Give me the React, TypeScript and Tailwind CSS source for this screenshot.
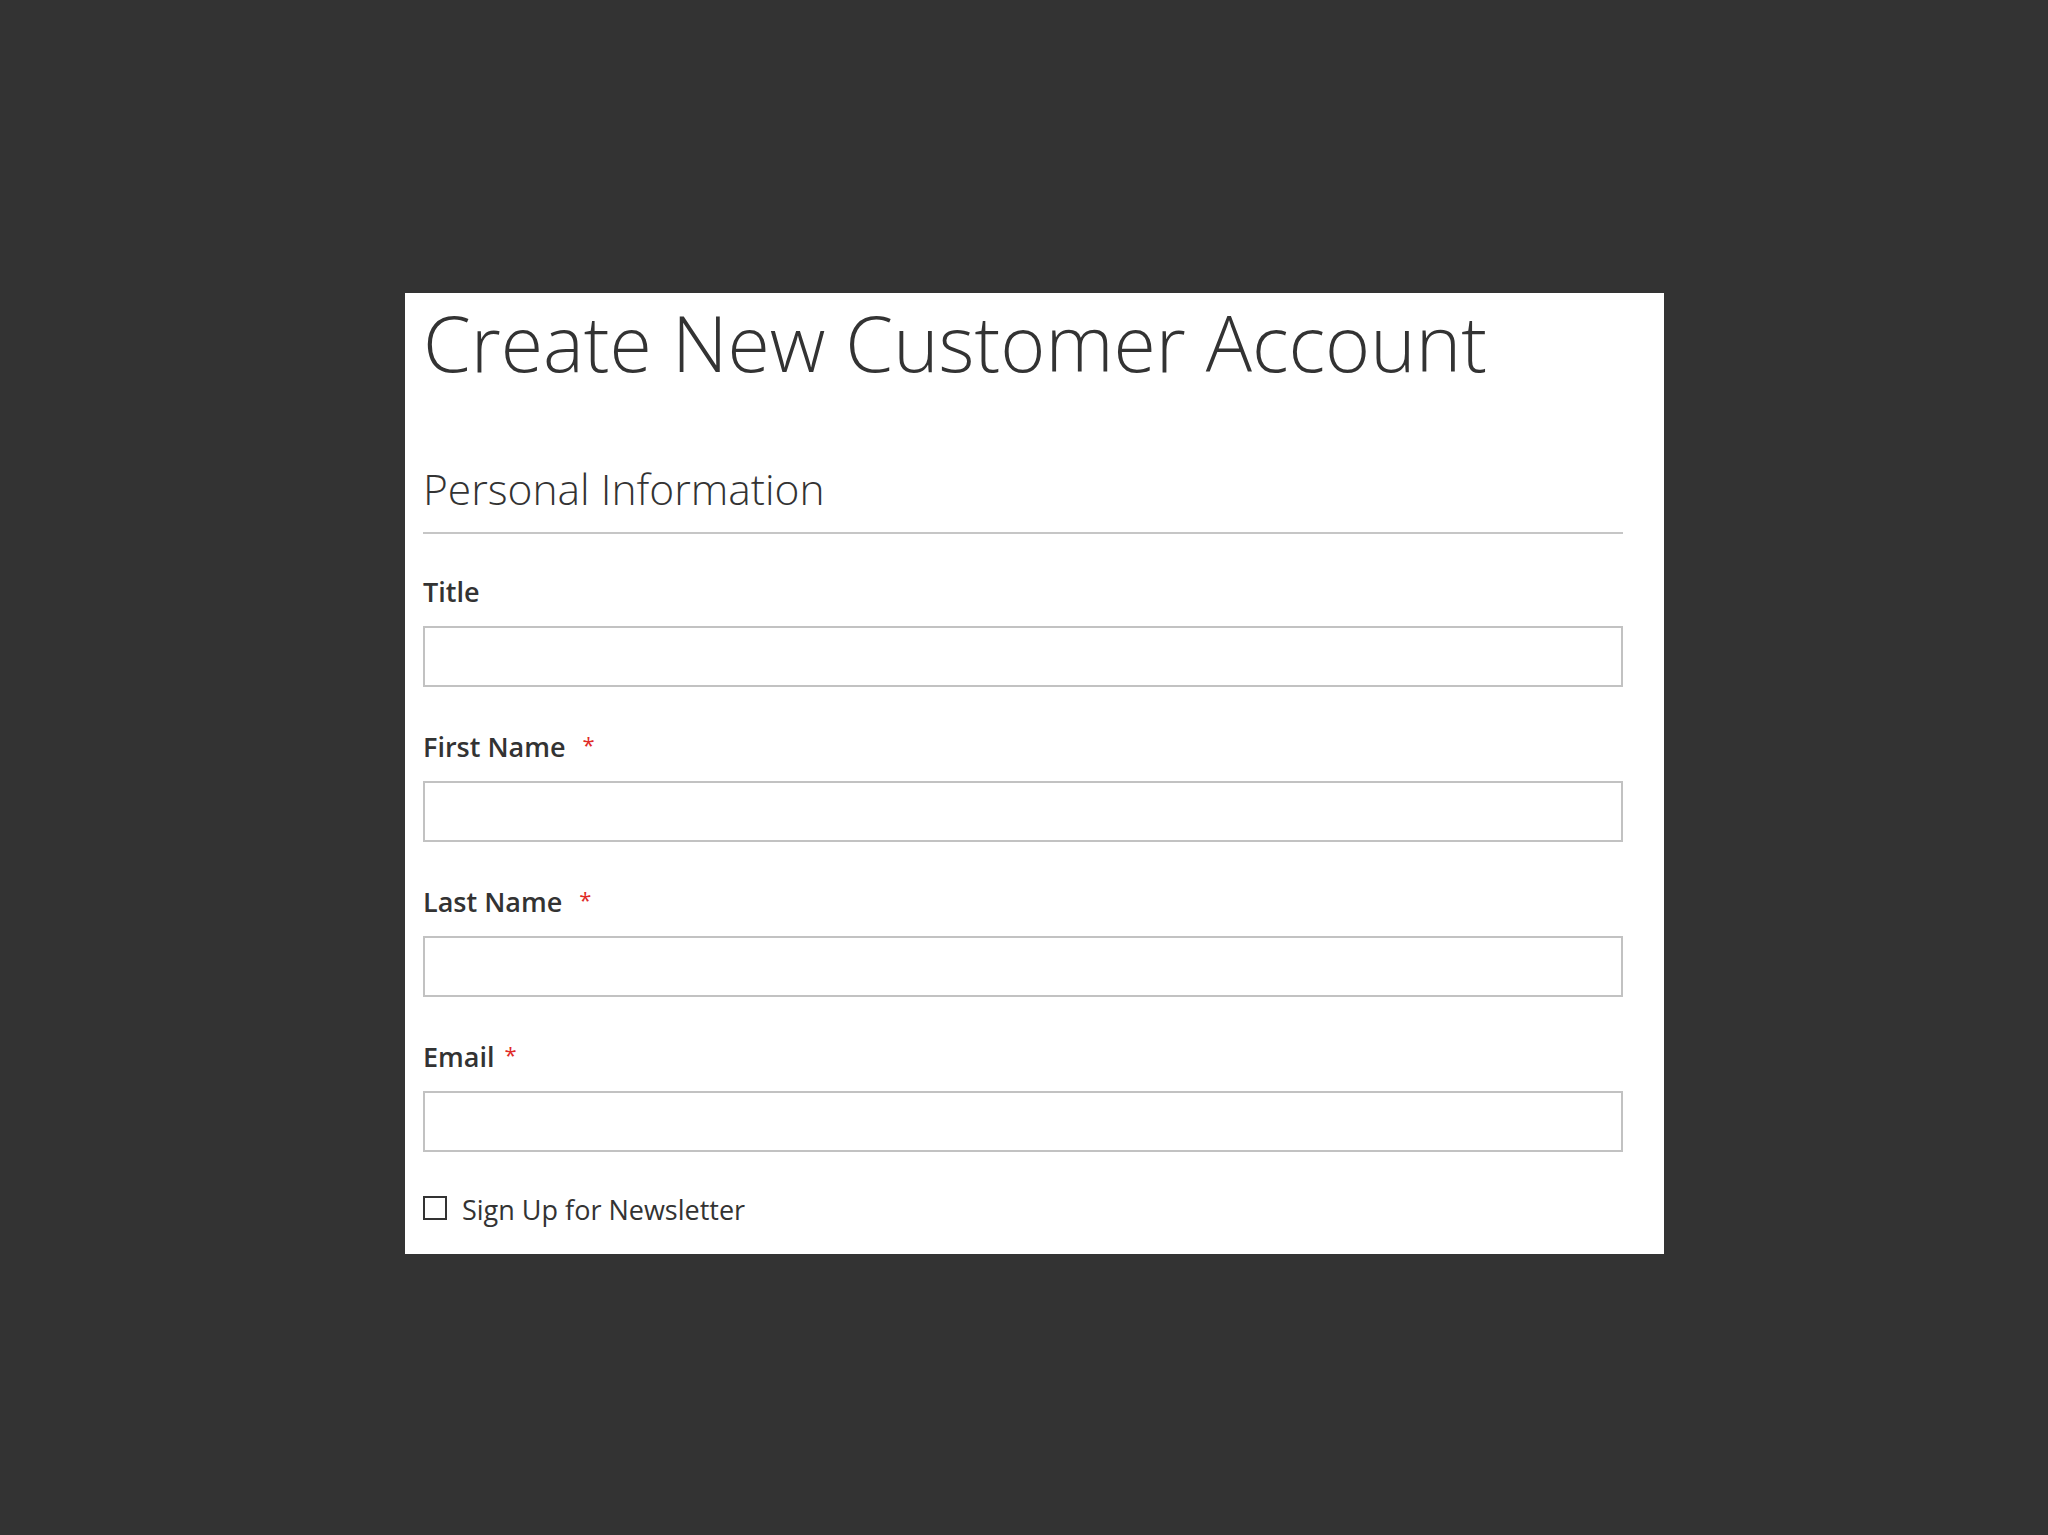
import React from "react";

const font = { fontFamily: '"Open Sans", "Liberation Sans", sans-serif' };

function Field({ label, required, spaced }: { label: string; required?: boolean; spaced?: boolean }) {
  return (
    <div className="mt-[46px] first:mt-[44px]">
      <label className="block text-[27px] leading-none font-semibold text-[#333]">
        {label}
        {spaced ? "\u00a0" : ""}
        {required && <span className="ml-[10px] align-top text-[22px] font-normal text-[#e02b27]">*</span>}
      </label>
      <input type="text" className="mt-[21px] block h-[61px] w-[1200px] border-2 border-[#c2c2c2] bg-white px-4 text-[28px] outline-none" />
    </div>
  );
}

export default function App() {
  return (
    <div className="min-h-[1535px] bg-[#333333] pl-[405px] pt-[293px]" style={font}>
      <div className="h-[961px] w-[1259px] bg-white pl-[18px]">
        <h1 className="pt-[11px] text-[77px] leading-none font-light text-[#333]">Create New Customer Account</h1>
        <div className="mt-[87px] w-[1200px] border-b-2 border-[#c6c6c6] pb-[21px]">
          <h2 className="text-[42.5px] leading-none font-light text-[#333]">Personal Information</h2>
        </div>
        <div>
          <Field label="Title" />
          <Field label="First Name" required spaced />
          <Field label="Last Name" required spaced />
          <Field label="Email" required />
        </div>
        <label className="mt-[44px] flex items-start">
          <span className="block h-6 w-6 border-2 border-[#333] bg-white" />
          <span className="ml-[15px] text-[27px] leading-none text-[#333]">Sign Up for Newsletter</span>
        </label>
      </div>
    </div>
  );
}
